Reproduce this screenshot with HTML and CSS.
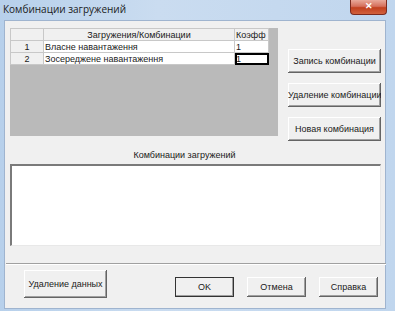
FILE: index.html
```html
<!DOCTYPE html>
<html lang="ru">
<head>
    <meta charset="UTF-8">
    <title>Комбинации загружений</title>
    <link rel="stylesheet" href="styles.css">
</head>
<body>
    <div class="window">
        <div class="titlebar">
            <span class="title">Комбинации загружений</span>
            <span class="close">&#x2715;</span>
        </div>

        <div class="client">
            <div class="top">
                <div class="grid">
                    <table>
                        <tr>
                            <th class="rowhdr"></th>
                            <th class="name">Загружения/Комбинации</th>
                            <th class="coef">Коэфф</th>
                        </tr>
                        <tr>
                            <th class="rowhdr">1</th>
                            <td>Власне навантаження</td>
                            <td>1</td>
                        </tr>
                        <tr>
                            <th class="rowhdr">2</th>
                            <td>Зосереджене навантаження</td>
                            <td class="focus">1</td>
                        </tr>
                    </table>
                </div>

                <div class="side">
                    <button class="btn side-btn">Запись комбинации</button>
                    <button class="btn side-btn">Удаление комбинации</button>
                    <button class="btn side-btn">Новая комбинация</button>
                </div>
            </div>

            <div class="caption">Комбинации загружений</div>
            <div class="memo"></div>

            <div class="separator"></div>

            <div class="bottom">
                <button class="btn big">Удаление данных</button>
                <div class="actions">
                    <button class="btn small default">OK</button>
                    <button class="btn small">Отмена</button>
                    <button class="btn small">Справка</button>
                </div>
            </div>
        </div>
    </div>
</body>
</html>
```

FILE: styles.css
```css
body {
    margin: 0;
    padding: 0;
    background-color: #c4d8ee;
    font-family: "Liberation Sans", Arial, sans-serif;
    font-size: 9px;
    color: #1a1a1a;
}
.window {
    width: 395px;
    height: 311px;
    overflow: hidden;
    background: linear-gradient(to right, #b7d0eb 0%, #cadcf0 40%, #c0d6ee 100%);
}
.titlebar {
    height: 20px;
    display: flex;
    align-items: center;
    justify-content: space-between;
    padding-left: 3px;
    box-sizing: border-box;
}
.title {
    font-family: "Open Sans", "Liberation Sans", sans-serif;
    font-size: 10px;
    color: #1a1a1a;
    margin-top: -2px;
}
.close {
    width: 35px;
    height: 14px;
    margin-right: 8px;
    align-self: flex-start;
    background: linear-gradient(to bottom, #e9a99a 0%, #d5705c 45%, #c2401f 55%, #d1623e 100%);
    border: 1px solid #7b2b1f;
    border-top: none;
    border-radius: 0 0 4px 4px;
    color: #fff;
    font-size: 9px;
    font-weight: bold;
    text-align: center;
    line-height: 13px;
}
.client {
    width: 382px;
    height: 289px;
    margin-left: 4px;
    background-color: #f0f0f0;
    border: 1px solid #9fb4cf;
    box-sizing: border-box;
}
.top {
    display: flex;
    align-items: flex-start;
    height: 108px;
    padding-top: 7px;
    padding-left: 5px;
}
.grid {
    width: 268px;
    height: 108px;
    background-color: #bababa;
}
.grid table {
    border-collapse: collapse;
    table-layout: fixed;
}
.grid th,
.grid td {
    height: 11px;
    padding: 0 1px;
    border: 1px solid #c8c8c8;
    font-weight: normal;
    line-height: 10px;
    white-space: nowrap;
    overflow: hidden;
    text-align: left;
}
.grid th {
    background-color: #f0f0f0;
}
.grid td {
    background-color: #fff;
}
.grid .rowhdr {
    width: 30px;
    text-align: center;
}
.grid .name {
    width: 188px;
    text-align: center;
}
.grid .coef {
    width: 31px;
}
.grid td.focus {
    outline: 2px solid #000;
    outline-offset: -2px;
}
.side {
    display: flex;
    flex-direction: column;
    margin-left: 10px;
    padding-top: 21px;
    gap: 10px;
}
.btn {
    font-family: "Liberation Sans", Arial, sans-serif;
    font-size: 9px;
    color: #1a1a1a;
    background-color: #f0f0f0;
    border: none;
    padding: 0;
    box-shadow: inset -1px -1px #646464, inset 1px 1px #fff, inset -2px -2px #a0a0a0;
    white-space: nowrap;
    overflow: hidden;
}
.side-btn {
    width: 93px;
    height: 24px;
}
.caption {
    width: 371px;
    margin: 12px 0 0 5px;
    padding-right: 22px;
    box-sizing: border-box;
    text-align: center;
    line-height: 14px;
}
.memo {
    width: 371px;
    height: 82px;
    margin: 2px 0 0 5px;
    background-color: #fff;
    box-sizing: border-box;
    border-top: 2px solid #7a7a7a;
    border-left: 2px solid #7a7a7a;
    border-right: 1px solid #e8e8e8;
    border-bottom: 1px solid #e8e8e8;
}
.separator {
    margin: 17px 0 0 1px;
    width: 380px;
    border-top: 1px solid #a0a0a0;
    border-bottom: 1px solid #fff;
}
.bottom {
    display: flex;
    align-items: flex-end;
    margin-top: 5px;
}
.big {
    width: 83px;
    height: 28px;
    margin-left: 19px;
}
.actions {
    display: flex;
    gap: 13px;
    margin-left: 68px;
    margin-bottom: 1px;
}
.small {
    width: 59px;
    height: 20px;
}
.default {
    outline: 1px solid #333;
    outline-offset: -1px;
}
```
